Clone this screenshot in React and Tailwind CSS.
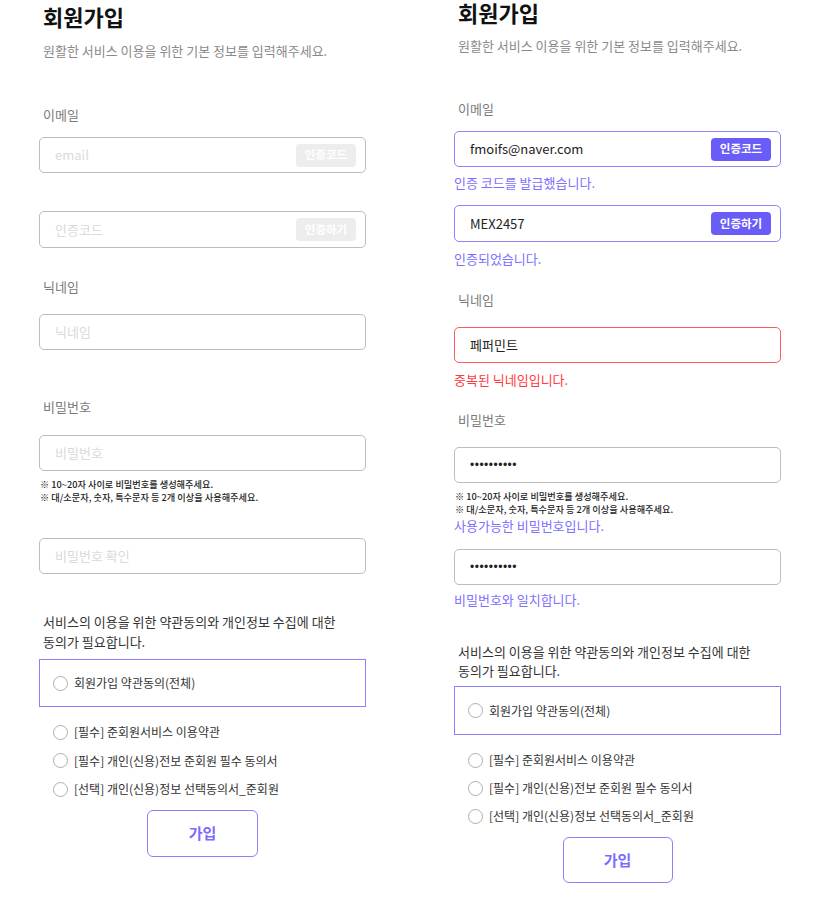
const font = { fontFamily: '"Noto Sans CJK KR", "Noto Sans", sans-serif' };

function InputBox({ className = "", border = "border-[#bdbdbd]", placeholder, value, dots, button, active }) {
  return (
    <div className={`flex items-center h-[36px] w-[327px] rounded-[5px] border ${border} pl-[15px] pr-[9px] ${className}`}>
      {dots ? (
        <span className="flex-1 text-[12px] text-[#222] tracking-[0.5px] font-['Liberation_Sans',sans-serif]">••••••••••</span>
      ) : (
        <input
          readOnly
          value={value || ""}
          placeholder={placeholder}
          className="flex-1 min-w-0 bg-transparent outline-none text-[13px] text-[#222] placeholder:text-[#dadada]"
        />
      )}
      {button && (
        <button
          className={`h-[23px] w-[60px] rounded-[4px] text-[11.5px] font-bold text-white ${active ? "bg-[#6a5cf7]" : "bg-[#ededed]"}`}
        >
          {button}
        </button>
      )}
    </div>
  );
}

function Label({ children, className = "" }) {
  return <p className={`pl-[4px] text-[13px] leading-[18px] text-[#7a7a7a] ${className}`}>{children}</p>;
}

function Msg({ children, className = "", red }) {
  return (
    <p className={`text-[13px] leading-[18px] ${red ? "text-[#ff3a3a]" : "text-[#7d70ff]"} ${className}`}>{children}</p>
  );
}

function Help({ className = "" }) {
  return (
    <div className={`pl-[1px] text-[9.2px] leading-[13px] font-medium text-[#222] ${className}`}>
      <p>※ 10~20자 사이로 비밀번호를 생성해주세요.</p>
      <p>※ 대/소문자, 숫자, 특수문자 등 2개 이상을 사용해주세요.</p>
    </div>
  );
}

function Radio({ children, className = "" }) {
  return (
    <div className={`flex items-center gap-[6px] text-[12px] text-[#333] ${className}`}>
      <span className="h-[15px] w-[15px] rounded-full border border-[#b0b0b0] bg-white" />
      <span>{children}</span>
    </div>
  );
}

function Terms({ textClass, boxClass, itemsClass, itemH, btnClass }) {
  return (
    <>
      <p className={`pl-[4px] text-[13px] text-[#333] ${textClass}`}>
        서비스의 이용을 위한 약관동의와 개인정보 수집에 대한
        <br />
        동의가 필요합니다.
      </p>
      <div className={`flex items-center w-[327px] border border-[#8c80ff] pl-[13px] ${boxClass}`}>
        <Radio>회원가입 약관동의(전체)</Radio>
      </div>
      <div className={`flex flex-col pl-[14px] ${itemsClass}`}>
        <Radio className={itemH}>[필수] 준회원서비스 이용약관</Radio>
        <Radio className={itemH}>[필수] 개인(신용)전보 준회원 필수 동의서</Radio>
        <Radio className={itemH}>[선택] 개인(신용)정보 선택동의서_준회원</Radio>
      </div>
      <div className="flex justify-center w-[327px]">
        <button
          className={`rounded-[6px] border-[1.5px] border-[#8c80ff] text-[15px] font-bold text-[#7b6cff] bg-white ${btnClass}`}
        >
          가입
        </button>
      </div>
    </>
  );
}

function Header({ titleClass, subClass }) {
  return (
    <>
      <h1 className={`pl-[4px] text-[22px] font-bold text-[#111] ${titleClass}`}>회원가입</h1>
      <p className={`pl-[4px] text-[13px] leading-[18px] text-[#8a8a8a] ${subClass}`}>
        원활한 서비스 이용을 위한 기본 정보를 입력해주세요.
      </p>
    </>
  );
}

export default function App() {
  return (
    <div className="flex w-[827px] h-[898px] bg-white overflow-hidden" style={font}>
      <div className="flex flex-col w-[414px] pl-[39px]">
        <Header titleClass="mt-[1px] leading-[30px]" subClass="mt-[11px]" />
        <Label className="mt-[46px]">이메일</Label>
        <InputBox className="mt-[13px]" placeholder="email" button="인증코드" />
        <InputBox className="mt-[38px] h-[37px]" placeholder="인증코드" button="인증하기" />
        <Label className="mt-[30px]">닉네임</Label>
        <InputBox className="mt-[18px]" placeholder="닉네임" />
        <Label className="mt-[48px]">비밀번호</Label>
        <InputBox className="mt-[19px]" placeholder="비밀번호" />
        <Help className="mt-[7px]" />
        <InputBox className="mt-[34px]" placeholder="비밀번호 확인" />
        <Terms
          textClass="mt-[38px] leading-[20px]"
          boxClass="mt-[7px] h-[48px]"
          itemsClass="mt-[11px]"
          itemH="h-[28.5px]"
          btnClass="mt-[6px] h-[47px] w-[111px]"
        />
      </div>
      <div className="flex flex-col w-[413px] pl-[40px]">
        <Header titleClass="mt-0 leading-[24px]" subClass="mt-[13px]" />
        <Label className="mt-[45px]">이메일</Label>
        <InputBox className="mt-[13px]" border="border-[#8f84ff]" value="fmoifs@naver.com" button="인증코드" active />
        <Msg className="mt-[7px]">인증 코드를 발급했습니다.</Msg>
        <InputBox className="mt-[13px] h-[37px]" border="border-[#8f84ff]" value="MEX2457" button="인증하기" active />
        <Msg className="mt-[8px]">인증되었습니다.</Msg>
        <Label className="mt-[23px]">닉네임</Label>
        <InputBox className="mt-[18px]" border="border-[#ff5c5c]" value="페퍼민트" />
        <Msg className="mt-[8px]" red>
          중복된 닉네임입니다.
        </Msg>
        <Label className="mt-[22px]">비밀번호</Label>
        <InputBox className="mt-[18px]" dots />
        <Help className="mt-[7px]" />
        <Msg className="mt-[1px]">사용가능한 비밀번호입니다.</Msg>
        <InputBox className="mt-[14px]" dots />
        <Msg className="mt-[6px]">비밀번호와 일치합니다.</Msg>
        <Terms
          textClass="mt-[33px] leading-[19px]"
          boxClass="mt-[6px] h-[49px]"
          itemsClass="mt-[11px]"
          itemH="h-[28px]"
          btnClass="mt-[7px] h-[46px] w-[110px]"
        />
      </div>
    </div>
  );
}
